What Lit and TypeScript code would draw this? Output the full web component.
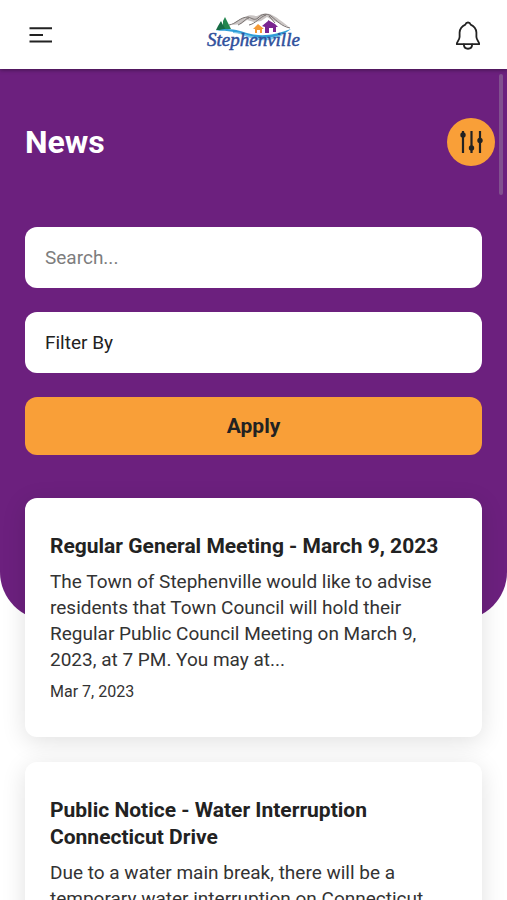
import { LitElement, html, css, svg } from "lit";
import { customElement, state } from "lit/decorators.js";

interface Article {
  title: string;
  summary: string;
  date: string;
}

const ARTICLES: Article[] = [
  {
    title: "Regular General Meeting - March 9, 2023",
    summary:
      "The Town of Stephenville would like to advise residents that Town Council will hold their Regular Public Council Meeting on March 9, 2023, at 7 PM. You may at...",
    date: "Mar 7, 2023",
  },
  {
    title: "Public Notice - Water Interruption Connecticut Drive",
    summary: "Due to a water main break, there will be a temporary water interruption on Connecticut",
    date: "",
  },
];

const menuIcon = svg`<svg class="icon" width="24" height="20" viewBox="0 0 24 20" aria-hidden="true">
  <path d="M1.5 3.3H24M1.5 10H15M1.5 16.6H24" fill="none" stroke="currentColor" stroke-width="2"/>
</svg>`;

const bellIcon = svg`<svg class="icon" width="28" height="32" viewBox="0 0 28 32" aria-hidden="true">
  <g fill="none" stroke="currentColor" stroke-width="1.8" stroke-linejoin="round" stroke-linecap="round">
    <path d="M2.8 25.2C2.2 23.6 5.4 21.5 5.6 18V13.5C5.9 9.5 8 7 11.4 5.6C12.2 2.8 15.8 2.8 16.6 5.6C20 7 22.1 9.5 22.4 13.5V18C22.6 21.5 25.8 23.6 25.2 25.2Z"/>
    <path d="M9.8 25.4C10.2 31.2 17.8 31.2 18.2 25.4"/>
  </g>
</svg>`;

const slidersIcon = svg`<svg class="icon" width="24" height="24" viewBox="0 0 24 24" aria-hidden="true">
  <path d="M4 1V23M12.5 1V23M21 1V23" fill="none" stroke="currentColor" stroke-width="2.2"/>
  <circle cx="4" cy="5" r="2.7" fill="currentColor"/>
  <circle cx="12.5" cy="18" r="2.7" fill="currentColor"/>
  <circle cx="21" cy="10.5" r="2.7" fill="currentColor"/>
</svg>`;

const townMark = svg`<svg class="mark" width="98" height="44" viewBox="0 0 98 44" role="img" aria-label="Stephenville">
  <path d="M27 12C31 8 36 5 41 4C45 1 49 3 52 3C57 0 61 0 65 1C72 4 76 8 84 14C77 12 73 9 67 7L62 4L56 8L49 9L42 7L36 11Z" fill="#c9c4c3"/>
  <path d="M24 12C31 11 35 4 43 4C47 5 49 8 53 5C56 1 62 0 66 3C72 8 76 13 85 15M33 12C38 10 41 5 44 5M44 12C50 11 55 4 61 2M64 3L70 10" fill="none" stroke="#77706f" stroke-width="1"/>
  <path d="M20 4L22 8L24 12L26 16H15L17 12H18L18 8Z" fill="#23864f"/>
  <path d="M16 8L18 12L21 17H11L13 13Z" fill="#176c45"/>
  <path d="M10 18C25 13 34 18 46 21C60 24 72 21 86 16C75 25 59 27 46 24C33 20 25 17 10 18Z" fill="#2f9fd8"/>
  <path d="M28 19C40 19 46 25 58 25C67 25 73 22 79 21C70 28 56 29 46 25C39 23 35 20 28 20Z" fill="#7cc8ea"/>
  <path d="M48 16L53 11L59 16H57V20H55V17H52V20H50V16Z" fill="#f59a35"/>
  <path d="M57 13L63 8V7L70 11L73 14L71 14V19H68V15H64V20H60V14Z" fill="#7a2590"/>
  <text x="2" y="33" class="wordmark">Stephenville</text>
</svg>`;

@customElement("app-root")
export class AppRoot extends LitElement {
  @state() private query = "";

  static styles = css`
    :host {
      display: flex;
      flex-direction: column;
      height: 100vh;
      overflow: hidden;
      position: relative;
      background: #fff;
      color: #222;
      font-family: Roboto, "Liberation Sans", sans-serif;
    }
    * {
      box-sizing: border-box;
    }
    button,
    input,
    select {
      font: inherit;
      color: inherit;
      border: 0;
      margin: 0;
    }
    .icon,
    .mark {
      display: block;
      overflow: visible;
    }
    .topbar {
      flex: none;
      display: grid;
      grid-template-columns: 1fr auto 1fr;
      align-items: center;
      height: 69px;
      padding: 0 25px;
      background: #fff;
      box-shadow: 0 1px 4px rgba(0, 0, 0, 0.4);
      z-index: 1;
    }
    .plain {
      justify-self: start;
      background: none;
      padding: 3px;
      cursor: pointer;
    }
    .end {
      justify-self: end;
      padding: 0;
    }
    .wordmark {
      font: italic 19px "Liberation Serif", serif;
      fill: #2f509c;
      stroke: #2f509c;
      stroke-width: 0.5px;
    }
    .scroller {
      flex: 1;
      min-height: 0;
      overflow: hidden;
    }
    .hero {
      background: #6c207e;
      border-radius: 0 0 48px 48px;
      padding: 48px 25px 165px;
    }
    .heading {
      display: flex;
      align-items: center;
      justify-content: space-between;
      height: 50px;
      margin: 0 -13px 60px 0;
    }
    h1 {
      margin: 0;
      color: #fff;
      font-size: 32px;
      line-height: 40px;
      font-weight: 700;
    }
    .round {
      display: grid;
      place-items: center;
      width: 48px;
      height: 48px;
      padding: 0;
      border-radius: 50%;
      background: #f99f38;
      cursor: pointer;
    }
    .filters {
      display: grid;
      gap: 24px;
    }
    .field {
      width: 100%;
      height: 61px;
      padding: 0 20px;
      border-radius: 12px;
      background: #fff;
      font-size: 19px;
      appearance: none;
    }
    .field::placeholder {
      color: #7d7d7d;
      opacity: 1;
    }
    .apply {
      height: 58px;
      border-radius: 12px;
      background: #f99f38;
      font-size: 21px;
      font-weight: 700;
      cursor: pointer;
    }
    .list {
      display: grid;
      gap: 25px;
      margin: -122px 0 0;
      padding: 0 25px 25px;
      list-style: none;
    }
    .card {
      padding: 35px 25px;
      border-radius: 12px;
      background: #fff;
      box-shadow: 0 5px 25px rgba(0, 0, 0, 0.12);
    }
    h2 {
      margin: 0;
      font-size: 21px;
      line-height: 27px;
      font-weight: 700;
    }
    p {
      margin: 9px 0;
      color: #333;
      font-size: 19px;
      line-height: 26px;
    }
    time {
      display: block;
      color: #333;
      font-size: 16px;
      line-height: 20px;
    }
    .thumb {
      position: absolute;
      top: 74px;
      right: 4px;
      width: 4px;
      height: 121px;
      border-radius: 2px;
      background: #81508f;
    }
  `;

  render() {
    return html`
      <header class="topbar">
        <button class="plain" aria-label="Menu">${menuIcon}</button>
        ${townMark}
        <button class="plain end" aria-label="Notifications">${bellIcon}</button>
      </header>
      <main class="scroller">
        <section class="hero">
          <div class="heading">
            <h1>News</h1>
            <button class="round" aria-label="Toggle filters">${slidersIcon}</button>
          </div>
          <form class="filters" @submit=${(e: Event) => e.preventDefault()}>
            <input
              class="field"
              type="text"
              aria-label="Search"
              placeholder="Search..."
              .value=${this.query}
              @input=${(e: Event) => (this.query = (e.target as HTMLInputElement).value)}
            />
            <select class="field" aria-label="Filter By">
              <option>Filter By</option>
            </select>
            <button class="apply" type="submit">Apply</button>
          </form>
        </section>
        <ul class="list">
          ${ARTICLES.map(
            (a) => html`<li class="card">
              <h2>${a.title}</h2>
              <p>${a.summary}</p>
              ${a.date ? html`<time>${a.date}</time>` : ""}
            </li>`
          )}
        </ul>
      </main>
      <div class="thumb"></div>
    `;
  }
}
